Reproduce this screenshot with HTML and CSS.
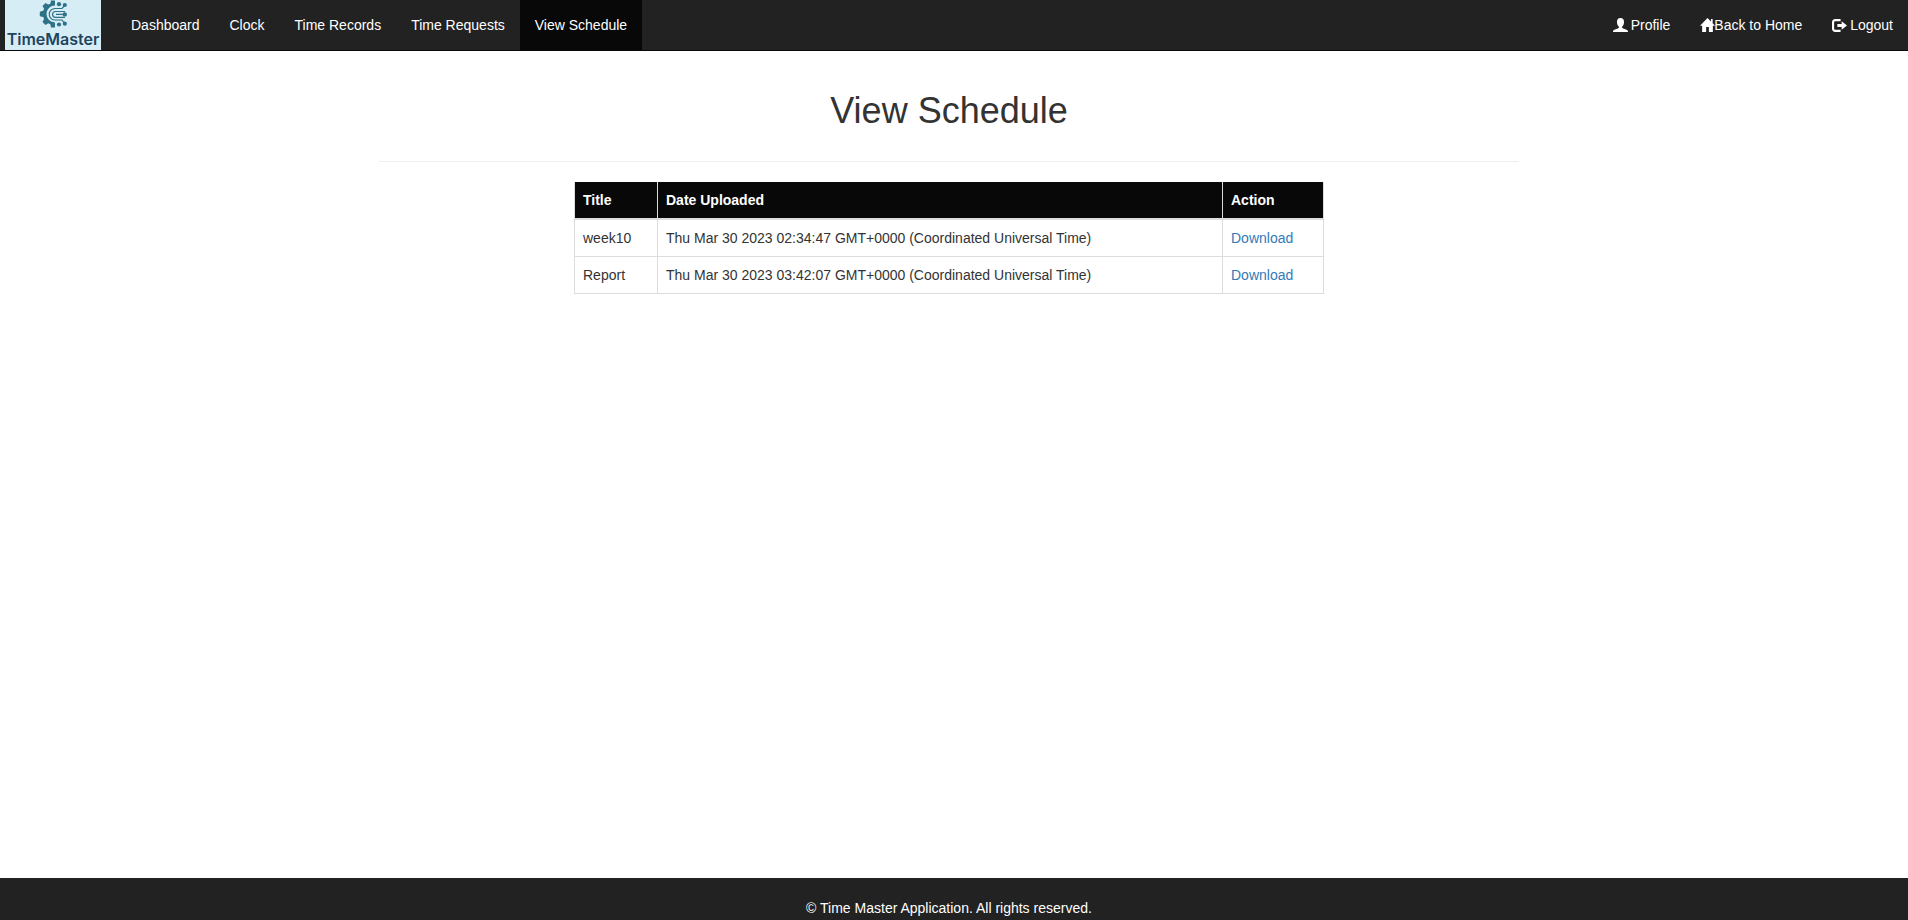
FILE: index.html
```html
<!DOCTYPE html>
<html lang="en">
<head>
<meta charset="utf-8">
<title>View Schedule</title>
<link rel="stylesheet" href="styles.css">
</head>
<body>
<nav class="navbar">
  <a class="brand" href="#" aria-label="TimeMaster">
    <svg class="brand-mark" viewBox="0 0 28 28" aria-hidden="true">
      <path class="gear" d="M16 .5h-4l-.7 3.200-2 .9L6.500 3 3.500 6l1.600 2.800-.9 2L.8 11.700v4.500l3.400.9.900 2L3.500 22l3 3 2.800-1.700 2 .9.700 3.300h4v-5a8.500 8.500 0 1 1 0-17z"/>
      <path class="trace" d="M20 8.500h-4a5.500 5.500 0 0 0 0 11.500h4M26 11.500h-9.500a2.800 2.800 0 0 0 0 5.800H26M26 14.400h-9M26 5l-3 3.500h-4M26 24l-3-4h-4"/>
      <circle class="dot" cx="20" cy="4.200" r="2.100"/><circle class="dot" cx="25.800" cy="5" r="2.100"/><circle class="dot" cx="25.800" cy="14.400" r="2.200"/><circle class="dot" cx="25.800" cy="23.700" r="2.100"/><circle class="dot" cx="20" cy="24.500" r="2.100"/>
    </svg>
    <span class="brand-name">TimeMaster</span>
  </a>
  <ul class="nav-list">
    <li><a href="#">Dashboard</a></li>
    <li><a href="#">Clock</a></li>
    <li><a href="#">Time Records</a></li>
    <li><a href="#">Time Requests</a></li>
    <li><a class="active" href="#" aria-current="page">View Schedule</a></li>
  </ul>
  <ul class="nav-list nav-right">
    <li><a href="#"><svg class="icon" viewBox="0 0 14 14" aria-hidden="true"><path d="M7 0C4.900 0 3.700 1.400 3.700 3.500c0 2 .6 3.700 1.800 4.700v1C5 10 1 10.800.2 11.800c-.2.400-.2 1.200-.2 1.200h14s0-.8-.2-1.200C13 10.800 9 10 8.500 9.200v-1c1.200-1 1.800-2.700 1.800-4.700C10.300 1.400 9.100 0 7 0z"/></svg> Profile</a></li>
    <li><a href="#"><svg class="icon" viewBox="0 0 14 14" aria-hidden="true"><path d="M7 0 0 7.300h2V13h3.700V8.500h2.600V13H12V7.300h2l-2.200-2.400V1h-1.600v2.300z"/></svg>Back to Home</a></li>
    <li><a href="#"><svg class="icon" viewBox="0 0 14 14" aria-hidden="true"><path d="M8 1H3C1.300 1 0 2.300 0 4v6c0 1.700 1.300 3 3 3h5v-2H3.200c-.7 0-1.200-.5-1.200-1.200V4.200C2 3.500 2.500 3 3.200 3H8zM9 3l5 4-5 4V8.500H5v-3h4z"/></svg> Logout</a></li>
  </ul>
</nav>
<main class="content">
  <h1>View Schedule</h1>
  <hr>
  <table class="schedule">
    <thead>
      <tr><th class="col-title" scope="col">Title</th><th scope="col">Date Uploaded</th><th class="col-action" scope="col">Action</th></tr>
    </thead>
    <tbody>
      <tr><td>week10</td><td>Thu Mar 30 2023 02:34:47 GMT+0000 (Coordinated Universal Time)</td><td><a href="#">Download</a></td></tr>
      <tr><td>Report</td><td>Thu Mar 30 2023 03:42:07 GMT+0000 (Coordinated Universal Time)</td><td><a href="#">Download</a></td></tr>
    </tbody>
  </table>
</main>
<footer class="footer">© Time Master Application. All rights reserved.</footer>
</body>
</html>
```

FILE: styles.css
```css
* { box-sizing: border-box; }

body {
  display: flex;
  flex-direction: column;
  min-height: 100vh;
  margin: 0;
  background: #fff;
  color: #333;
  font: 14px/20px "Liberation Sans", Arial, sans-serif;
}

a { color: #337ab7; text-decoration: none; }

.navbar {
  display: flex;
  background: #222;
  border-bottom: 1px solid #080808;
}

.brand {
  display: flex;
  flex-direction: column;
  align-items: center;
  width: 96px;
  height: 50px;
  margin: 0 15px 0 5px;
  background: #d7edf5;
}

.brand-mark { display: block; width: 28px; height: 29px; }
.gear { fill: #2f7186; }
.trace { fill: none; stroke: #2f7186; stroke-width: 1.2; }
.dot { fill: #2f7186; }

.brand-name {
  color: #1e4560;
  font: 600 16px/22px Inter, sans-serif;
}

.nav-list {
  display: flex;
  margin: 0;
  padding: 0;
  list-style: none;
}

.nav-list a {
  display: block;
  padding: 15px;
  color: #fff;
}

.nav-list .active { background: #080808; }
.nav-right { margin-left: auto; }

.icon {
  display: inline-block;
  width: 15px;
  height: 15px;
  margin: -1px -1px -1px 0;
  vertical-align: -2px;
  fill: #fff;
}

.content {
  flex: 1;
  padding: 40px 10px 20px 0;
}

h1 {
  margin: 0;
  font-size: 36px;
  font-weight: 400;
  line-height: 40px;
  text-align: center;
}

hr {
  max-width: 1140px;
  margin: 30px auto 20px;
  border: 0;
  border-top: 1px solid #eee;
}

.schedule {
  width: 100%;
  max-width: 750px;
  margin: 0 auto;
  border-collapse: collapse;
  border: 1px solid #ddd;
  border-top: 0;
}

.schedule th,
.schedule td {
  padding: 8px;
  border: 1px solid #ddd;
  text-align: left;
}

.schedule th {
  background: #080808;
  border-top: 0;
  border-bottom-width: 2px;
  color: #fff;
}

.col-title { width: 83px; }
.col-action { width: 101px; }

.footer {
  padding: 20px 10px 2px 0;
  background: #222;
  color: #fff;
  text-align: center;
}
```
